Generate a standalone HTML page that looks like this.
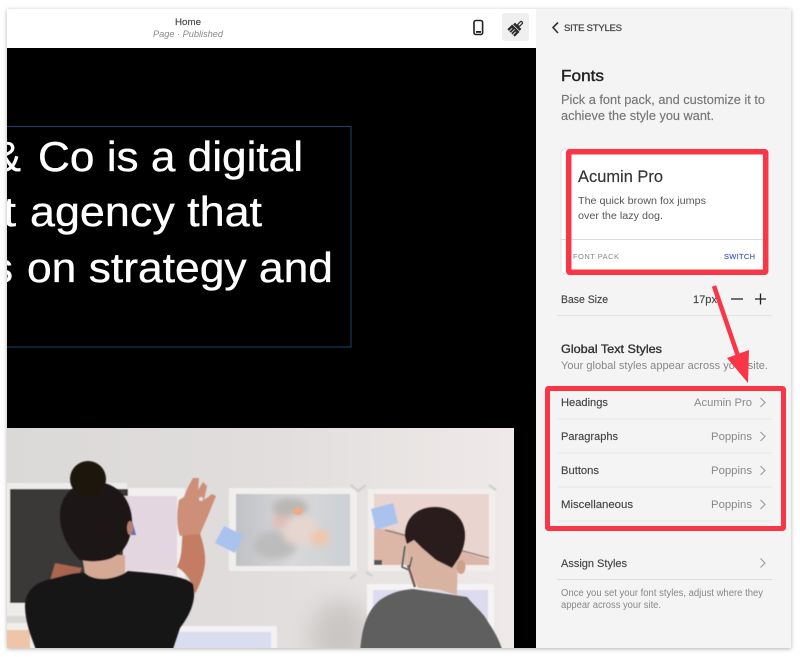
<!DOCTYPE html>
<html><head><meta charset="utf-8"><style>
html,body{margin:0;padding:0;background:#fff;width:800px;height:657px;overflow:hidden}
svg{display:block}
text{font-family:"Liberation Sans",sans-serif}
</style></head><body>
<svg xmlns="http://www.w3.org/2000/svg" width="800" height="657" viewBox="0 0 800 657">
<defs>
<filter id="sh" x="-3%" y="-3%" width="106%" height="106%"><feDropShadow dx="0" dy="1" stdDeviation="2" flood-color="#000" flood-opacity=".3"/></filter>
<filter id="b1"><feGaussianBlur stdDeviation="0.3"/></filter>
<filter id="b2" x="-10%" y="-10%" width="120%" height="120%"><feGaussianBlur stdDeviation="0.6"/></filter>
<filter id="b3" x="-30%" y="-30%" width="160%" height="160%"><feGaussianBlur stdDeviation="3.5"/></filter>
<filter id="b8" x="-50%" y="-50%" width="200%" height="200%"><feGaussianBlur stdDeviation="12"/></filter>
<linearGradient id="wall" x1="0" y1="0" x2="1" y2="0"><stop offset="0" stop-color="#dbd9d7"/><stop offset=".5" stop-color="#e0dddc"/><stop offset="1" stop-color="#efeae9"/></linearGradient>
<linearGradient id="art" x1="0" y1="0" x2="1" y2="0"><stop offset="0" stop-color="#bfc2c6"/><stop offset=".5" stop-color="#d9d8da"/><stop offset="1" stop-color="#ccd0d4"/></linearGradient>
<clipPath id="ph"><rect x="7" y="428" width="507" height="220"/></clipPath>
<clipPath id="art2"><rect x="236" y="494" width="114" height="72"/></clipPath>
<clipPath id="win"><rect x="7" y="48" width="529" height="600"/></clipPath>
</defs>
<rect x="7" y="9" width="784" height="639" fill="#fff" filter="url(#sh)"/>
<rect x="536" y="9" width="255" height="639" fill="#f4f4f4"/>
<rect x="7" y="48" width="529" height="600" fill="#000"/>

<!-- header -->
<g filter="url(#b1)">
<text x="175" y="25" font-size="9.500" fill="#444" stroke="#444" stroke-width=".15" textLength="26" lengthAdjust="spacingAndGlyphs">Home</text>
<text x="153" y="37" font-size="9.500" fill="#888" font-style="italic" textLength="70" lengthAdjust="spacingAndGlyphs">Page · Published</text>
<rect x="474" y="20.500" width="8.600" height="14" rx="1.800" fill="none" stroke="#222" stroke-width="1.600"/>
<rect x="476" y="31" width="5" height="1.800" fill="#222"/>
<rect x="502" y="13" width="27" height="28" rx="3" fill="#efefef"/>
<g transform="translate(515 29) rotate(45)">
<rect x="-1.300" y="-10" width="2.600" height="5.500" rx="1.200" fill="none" stroke="#2a2a2a" stroke-width="1.200"/>
<rect x="-4.500" y="-4.500" width="9" height="2.600" fill="#2a2a2a"/>
<rect x="-5.200" y="-1.200" width="10.400" height="6.800" fill="#2a2a2a"/>
<path d="M-2.500 1.500v4M0 .5v5M2.500 1.500v4" stroke="#efefef" stroke-width=".8"/>
</g>
</g>

<!-- hero text -->
<g clip-path="url(#win)">
<rect x="0" y="126.500" width="351" height="220.500" fill="none" stroke="#14466f" stroke-width="1"/>
<g fill="#fff" stroke="#fff" stroke-width=".35" font-size="42" filter="url(#b1)">
<text x="-6" y="171" textLength="27" lengthAdjust="spacingAndGlyphs">&amp;</text>
<text x="38" y="171" textLength="265" lengthAdjust="spacingAndGlyphs">Co is a digital</text>
<text x="3" y="226" textLength="13" lengthAdjust="spacingAndGlyphs">t</text>
<text x="30" y="226" textLength="232" lengthAdjust="spacingAndGlyphs">agency that</text>
<text x="-8" y="282" textLength="21" lengthAdjust="spacingAndGlyphs">s</text>
<text x="27" y="282" textLength="306" lengthAdjust="spacingAndGlyphs">on strategy and</text>
</g>
</g>

<!-- photo -->
<g clip-path="url(#ph)">
<rect x="7" y="428" width="507" height="220" fill="url(#wall)"/>
<ellipse cx="340" cy="635" rx="30" ry="35" fill="#c9c6c4" filter="url(#b8)"/>
<g filter="url(#b2)">
<rect x="2" y="483" width="125" height="133" fill="#eeecea"/>
<rect x="120" y="488" width="65" height="127" fill="#f1efef"/>
<rect x="10" y="489" width="118" height="114" fill="#3b3838"/>
<rect x="123" y="496" width="54" height="74" fill="#e4d6e0"/>
<rect x="123" y="570" width="54" height="45" fill="#e6dee2"/>
<!-- bottom frames -->
<rect x="2" y="623" width="33" height="30" fill="#efeeea"/>
<rect x="2" y="630" width="28" height="24" fill="#eec5a9"/>
<rect x="173" y="626" width="104" height="28" fill="#f3f1f3"/>
<rect x="173" y="632" width="98" height="22" fill="#dadcf0"/>
<!-- frame 2 -->
<rect x="229" y="488" width="128" height="83" fill="#f1efee"/>
<rect x="236" y="494" width="114" height="72" fill="url(#art)"/>
<!-- frame 3 -->
<rect x="368" y="489" width="127" height="82" fill="#f2eeec"/>
<rect x="374" y="494" width="115" height="71" fill="#e9d4cf"/>
<path d="M374 565V528L392 530 489 560V565Z" fill="#dcb6a6"/>
<path d="M385 530L489 558" stroke="#8a7570" stroke-width="1.300" fill="none"/>
<path d="M374 560h8v5h-8z" fill="#555"/>
<!-- frame 4 -->
<rect x="367" y="584" width="127" height="70" fill="#f5f3f4"/>
<rect x="373" y="590" width="115" height="64" fill="#dcdcee"/>
</g>
<g clip-path="url(#art2)">
<g filter="url(#b3)">
<ellipse cx="290" cy="508" rx="18" ry="10" fill="#b9b7b4"/>
<ellipse cx="275" cy="545" rx="22" ry="14" fill="#bcbcbc"/>
<ellipse cx="300" cy="530" rx="18" ry="16" fill="#e5d6d0"/>
<ellipse cx="320" cy="538" rx="9" ry="8" fill="#f2c5a8"/>
<ellipse cx="280" cy="522" rx="8" ry="6" fill="#e2bcb6"/>
</g>
<ellipse cx="298" cy="511" rx="5" ry="4" fill="#eeab8a" filter="url(#b1)"/>
</g>
<g filter="url(#b2)">
<!-- sticky -->
<path d="M224 526L243 535 235 553 215 543Z" fill="#aac2ee"/>
<path d="M371 509L393 503 398 523 376 530Z" fill="#aac2ee"/>
<path d="M131 517l5 18h-9z" fill="#4f72b8"/>
<!-- tape -->
<g stroke="#d2d0ce" stroke-width="2.500" fill="none"><path d="M351 485l7 6 8-6M489 485l7 5M356 574l-6 5M366 572l6 4"/></g>
<!-- man -->
<path d="M360 652C362 625 368 610 380 600 392 592 402 590 413 589L467 597C474 606 483 612 488 622 495 632 500 642 503 652Z" fill="#5f5f5e"/>
<path d="M408 535L458 540 457 595 440 590 418 588C412 575 406 555 408 535Z" fill="#d9b3a2"/>
<ellipse cx="461" cy="567" rx="4.500" ry="7" fill="#cfa08c"/>
<path d="M405 536C405 518 417 507 435 507 453 507 465 519 465 535 465 549 458 560 452 568L436 560 422 548 414 540 407 544Z" fill="#2b1c1a"/>
<path d="M405 546l-3 21 7 3 3-13" fill="none" stroke="#4b5a60" stroke-width="1.500"/>
<path d="M408 565l7 22" stroke="#7a5a50" stroke-width="2.500" fill="none"/>
<!-- woman arm -->
<path d="M55 563L82 568 76 582 50 580Z" fill="#a9654f"/>
<path d="M183 530C181 545 183 555 177 567 185 572 192 580 195 594 202 580 206 568 205 556 204 545 201 537 199 530Z" fill="#c47d63"/>
<!-- hand -->
<path d="M180 536C176 525 177 510 179 500L184 497 188 487 193 478 199 478 198 490 203 482 207 486 204 500 212 494 216 496 207 518 200 534Z" fill="#cd8f78"/>
<circle cx="201" cy="499" r="2" fill="#e2e2e2"/>
<!-- neck -->
<path d="M82 555H125V574L105 583 85 575Z" fill="#d6a994"/>
<!-- shirt -->
<path d="M25 605C26 592 33 582 55 578 70 574 78 572 85 573 95 582 115 580 128 571 150 573 185 575 193 584 197 600 190 615 180 628L172 652H37C30 635 25 620 25 605Z" fill="#171615"/>
<!-- hair -->
<path d="M60 515C60 497 72 482 95 482 120 482 132 503 132 522 131 542 124 552 112 558 102 562 90 562 80 560 70 550 60 535 60 515Z" fill="#1d1514"/>
<circle cx="88" cy="479" r="18" fill="#1a1211"/>
<ellipse cx="130" cy="528" rx="3" ry="7" fill="#b8806c"/>
</g>
</g>

<!-- sidebar -->
<g filter="url(#b1)">
<path d="M558 22.500L553 27.500 558 33" fill="none" stroke="#333" stroke-width="1.600"/>
<text x="564" y="31" font-size="9.500" fill="#444" stroke="#444" stroke-width=".25" textLength="58" lengthAdjust="spacing">SITE STYLES</text>
<text x="561" y="81" font-size="16" fill="#222" stroke="#222" stroke-width=".4" textLength="43" lengthAdjust="spacingAndGlyphs">Fonts</text>
<text x="561" y="104" font-size="12.500" fill="#777" stroke="#777" stroke-width=".15" textLength="204" lengthAdjust="spacingAndGlyphs">Pick a font pack, and customize it to</text>
<text x="561" y="120" font-size="12.500" fill="#777" stroke="#777" stroke-width=".15" textLength="153" lengthAdjust="spacingAndGlyphs">achieve the style you want.</text>

<rect x="561" y="149" width="205" height="125" rx="4" fill="#fff" stroke="#e4e4e4"/>
<text x="578" y="182" font-size="16.500" fill="#333" stroke="#333" stroke-width=".15" textLength="85" lengthAdjust="spacingAndGlyphs">Acumin Pro</text>
<text x="578" y="204" font-size="10" fill="#555" textLength="128" lengthAdjust="spacingAndGlyphs">The quick brown fox jumps</text>
<text x="578" y="219" font-size="10" fill="#555" textLength="85" lengthAdjust="spacingAndGlyphs">over the lazy dog.</text>
<rect x="561" y="239" width="205" height="1" fill="#dcdcdc"/>
<text x="573" y="259" font-size="7.500" fill="#888" textLength="46" lengthAdjust="spacing">FONT PACK</text>
<text x="724" y="259" font-size="7.500" fill="#4c62c4" stroke="#4c62c4" stroke-width=".2" textLength="31" lengthAdjust="spacing">SWITCH</text>

<text x="561" y="303" font-size="11" fill="#444" stroke="#444" stroke-width=".15" textLength="47" lengthAdjust="spacingAndGlyphs">Base Size</text>
<text x="693" y="303" font-size="11" fill="#444" stroke="#444" stroke-width=".15" textLength="24" lengthAdjust="spacingAndGlyphs">17px</text>
<path d="M731 299h12M755 299h11M760.500 293.500v11" stroke="#222" stroke-width="1.300" fill="none"/>
<rect x="557" y="315" width="215" height="1" fill="#e3e3e3"/>

<text x="561" y="353" font-size="12" fill="#333" stroke="#333" stroke-width=".35" textLength="101" lengthAdjust="spacingAndGlyphs">Global Text Styles</text>
<text x="561" y="369" font-size="11" fill="#888" textLength="207" lengthAdjust="spacingAndGlyphs">Your global styles appear across your site.</text>

<g font-size="11" fill="#444" stroke="#444" stroke-width=".15">
<text x="561" y="406" textLength="47" lengthAdjust="spacingAndGlyphs">Headings</text>
<text x="561" y="440" textLength="57" lengthAdjust="spacingAndGlyphs">Paragraphs</text>
<text x="561" y="474" textLength="38" lengthAdjust="spacingAndGlyphs">Buttons</text>
<text x="561" y="508" textLength="72" lengthAdjust="spacingAndGlyphs">Miscellaneous</text>
<text x="561" y="567" textLength="66" lengthAdjust="spacingAndGlyphs">Assign Styles</text>
</g>
<g font-size="11" fill="#888">
<text x="694" y="406" textLength="58" lengthAdjust="spacingAndGlyphs">Acumin Pro</text>
<text x="711" y="440" textLength="41" lengthAdjust="spacingAndGlyphs">Poppins</text>
<text x="711" y="474" textLength="41" lengthAdjust="spacingAndGlyphs">Poppins</text>
<text x="711" y="508" textLength="41" lengthAdjust="spacingAndGlyphs">Poppins</text>
</g>
<path d="M760.500 398l4.500 4.500-4.500 4.500M760.500 432l4.500 4.500-4.500 4.500M760.500 466l4.500 4.500-4.500 4.500M760.500 500l4.500 4.500-4.500 4.500M760.500 558.500l4.500 4.500-4.500 4.500" fill="none" stroke="#999" stroke-width="1.100"/>
<g fill="#e6e6e6"><rect x="557" y="418.500" width="215" height="1"/><rect x="557" y="452.500" width="215" height="1"/><rect x="557" y="486.500" width="215" height="1"/><rect x="557" y="520.500" width="215" height="1"/></g>
<rect x="557" y="579" width="215" height="1" fill="#dcdcdc"/>
<text x="561" y="596" font-size="9.700" fill="#888" textLength="202" lengthAdjust="spacingAndGlyphs">Once you set your font styles, adjust where they</text>
<text x="561" y="608" font-size="9.700" fill="#888" textLength="100" lengthAdjust="spacingAndGlyphs">appear across your site.</text>

<!-- annotations -->
<rect x="568.700" y="151.700" width="197" height="120.500" rx="1" fill="none" stroke="#fa3645" stroke-width="5.500"/>
<rect x="547.500" y="388.500" width="236" height="140" rx="1" fill="none" stroke="#fa3645" stroke-width="5"/>
<path d="M714 286L738 356" stroke="#fa3645" stroke-width="4.500" fill="none"/>
<path d="M748 383L727 358 749 350Z" fill="#fa3645"/>
</g>
</svg>
</body></html>
